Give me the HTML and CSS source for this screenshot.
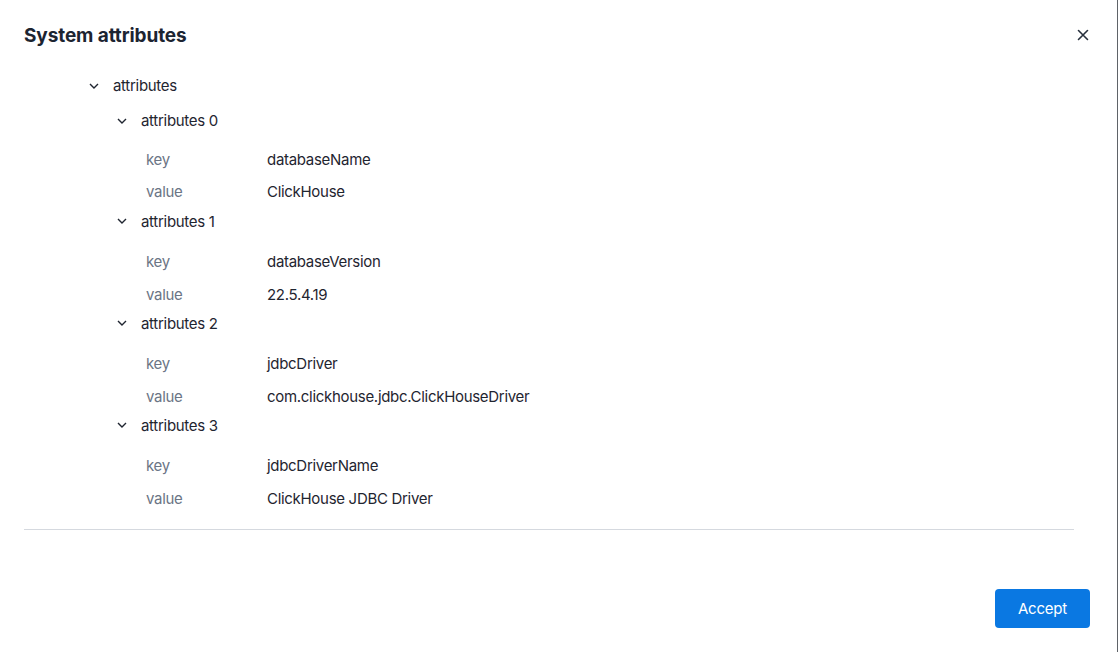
FILE: index.html
```html
<!DOCTYPE html>
<html>
<head>
<meta charset="utf-8">
<link rel="stylesheet" href="styles.css">
</head>
<body>
<div class="dialog">
  <header class="head">
    <h1 class="title">System attributes</h1>
    <button class="close" aria-label="Close">
      <svg width="12" height="12" viewBox="0 0 12 12"><path d="M1.5 1.5 L10.5 10.5 M10.5 1.5 L1.5 10.5" stroke="#27303d" stroke-width="1.6" fill="none" stroke-linecap="round"/></svg>
    </button>
  </header>
  <div class="body">
    <div class="tree">
      <div class="node root">
        <div class="row-head"><svg class="chev" width="10" height="6" viewBox="0 0 10 6"><path d="M1 1 L5 5 L9 1" stroke="#1f2530" stroke-width="1.4" fill="none"/></svg><span>attributes</span></div>
        <div class="children">
          <div class="group first">
            <div class="row-head"><svg class="chev" width="10" height="6" viewBox="0 0 10 6"><path d="M1 1 L5 5 L9 1" stroke="#1f2530" stroke-width="1.4" fill="none"/></svg><span>attributes 0</span></div>
            <div class="kv">
              <div class="k">key</div><div class="v">databaseName</div>
              <div class="k">value</div><div class="v">ClickHouse</div>
            </div>
          </div>
          <div class="group">
            <div class="row-head"><svg class="chev" width="10" height="6" viewBox="0 0 10 6"><path d="M1 1 L5 5 L9 1" stroke="#1f2530" stroke-width="1.4" fill="none"/></svg><span>attributes 1</span></div>
            <div class="kv">
              <div class="k">key</div><div class="v">databaseVersion</div>
              <div class="k">value</div><div class="v">22.5.4.19</div>
            </div>
          </div>
          <div class="group">
            <div class="row-head"><svg class="chev" width="10" height="6" viewBox="0 0 10 6"><path d="M1 1 L5 5 L9 1" stroke="#1f2530" stroke-width="1.4" fill="none"/></svg><span>attributes 2</span></div>
            <div class="kv">
              <div class="k">key</div><div class="v">jdbcDriver</div>
              <div class="k">value</div><div class="v">com.clickhouse.jdbc.ClickHouseDriver</div>
            </div>
          </div>
          <div class="group">
            <div class="row-head"><svg class="chev" width="10" height="6" viewBox="0 0 10 6"><path d="M1 1 L5 5 L9 1" stroke="#1f2530" stroke-width="1.4" fill="none"/></svg><span>attributes 3</span></div>
            <div class="kv">
              <div class="k">key</div><div class="v">jdbcDriverName</div>
              <div class="k">value</div><div class="v">ClickHouse JDBC Driver</div>
            </div>
          </div>
        </div>
      </div>
    </div>
    <div class="divider"></div>
  </div>
  <footer class="foot">
    <button class="accept">Accept</button>
  </footer>
</div>
</body>
</html>
```

FILE: styles.css
```css
* { box-sizing: border-box; }
html, body { margin: 0; padding: 0; background: #fff; }
body {
  font-family: Inter, "Noto Sans", sans-serif;
  color: #1f2530;
  width: 1118px;
  height: 652px;
  overflow: hidden;
}
.dialog {
  width: 1118px;
  height: 652px;
  border-right: 1px solid #5f6368;
  display: flex;
  flex-direction: column;
}
.head {
  display: flex;
  align-items: center;
  justify-content: space-between;
  height: 70px;
  padding: 0 28px 0 24px;
}
.title {
  margin: 0;
  font-size: 19px;
  font-weight: 700;
  color: #1c2431;
  letter-spacing: -0.1px;
}
.close {
  border: 0;
  background: none;
  padding: 0;
  width: 12px;
  height: 12px;
  display: flex;
  cursor: pointer;
}
.body {
  padding: 3px 43px 0 24px;
}
.tree {
  font-size: 15px;
  letter-spacing: -0.3px;
  padding-left: 64px;
}
.row-head {
  display: flex;
  align-items: center;
  height: 25.5px;
}
.chev {
  margin-left: 1px;
  margin-right: 14px;
}
.children {
  padding-left: 28px;
  margin-top: 9.5px;
}
.kv {
  display: grid;
  grid-template-columns: 121px 1fr;
  grid-auto-rows: 32.5px;
  align-items: center;
  margin: 11.5px 0 0 30px;
}
.group.first { padding-bottom: 0.5px; }
.group.first .kv { margin-top: 9.5px; }
.k { color: #6b7585; }
.v { color: #1f2530; }
.divider {
  height: 1px;
  background: #d5d9df;
  margin-top: 14px;
}
.foot {
  margin-top: auto;
  display: flex;
  justify-content: flex-end;
  padding: 0 27px 24px 0;
}
.accept {
  width: 95px;
  height: 39px;
  border: 0;
  border-radius: 4px;
  background: #0a78e2;
  color: #fff;
  font-family: Inter, "Noto Sans", sans-serif;
  font-size: 15px;
  letter-spacing: -0.2px;
}
```
